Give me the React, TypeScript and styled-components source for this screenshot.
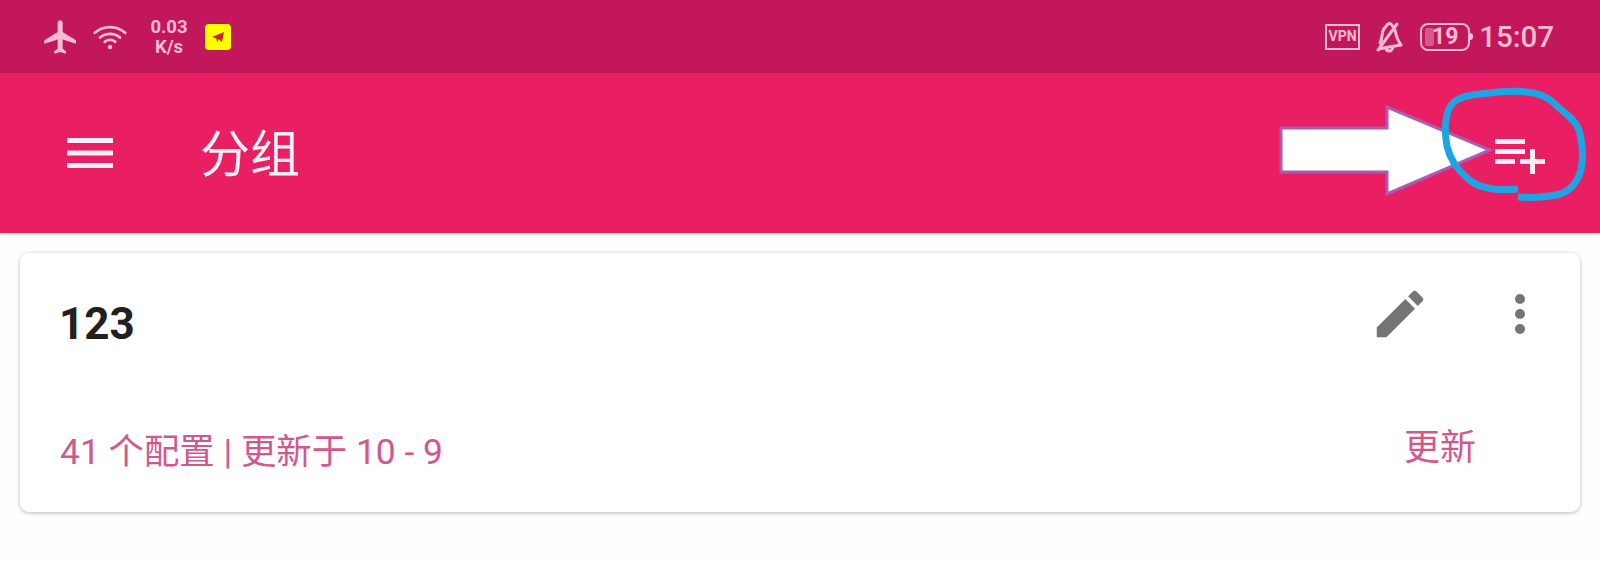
import React from 'react';
import styled, { createGlobalStyle } from 'styled-components';

const GlobalStyle = createGlobalStyle`
  html, body {
    margin: 0;
    padding: 0;
    background: #fefefe;
    font-family: Roboto, "Noto Sans CJK SC", sans-serif;
  }
`;

const Page = styled.div`
  width: 1600px;
  height: 562px;
  overflow: hidden;
  position: relative;
`;

const StatusBar = styled.div`
  height: 73px;
  background: #c2185b;
  color: #f8bbd0;
  display: flex;
  align-items: center;
  justify-content: space-between;
  padding: 0 46px 0 41px;
`;

const StatusGroup = styled.div`
  display: flex;
  align-items: center;
`;

const Speed = styled.div`
  width: 42px;
  margin: 0 14px 0 21px;
  font-size: 18.5px;
  font-weight: 700;
  line-height: 20px;
  text-align: center;
`;

const VpnBadge = styled.div`
  box-sizing: border-box;
  width: 35px;
  height: 26px;
  border: 2.5px solid #f8bbd0;
  font-size: 14px;
  font-weight: 700;
  line-height: 21px;
  text-align: center;
`;

const Battery = styled.div`
  box-sizing: border-box;
  width: 50px;
  height: 28px;
  margin: 0 2px 0 17px;
  border: 2.5px solid #f8bbd0;
  border-radius: 8px;
  font-size: 23px;
  font-weight: 700;
  line-height: 23px;
  text-align: center;
  position: relative;

  &::before {
    content: '';
    position: absolute;
    left: 3px;
    top: 3px;
    bottom: 3px;
    width: 9px;
    border-radius: 2px;
    background: rgba(248, 187, 208, 0.4);
  }

  &::after {
    content: '';
    position: absolute;
    right: -5px;
    top: 8px;
    width: 3px;
    height: 7px;
    border-radius: 0 3px 3px 0;
    background: #f8bbd0;
  }
`;

const Clock = styled.div`
  margin-left: 7px;
  font-size: 29.5px;
  font-weight: 500;
`;

const Toolbar = styled.div`
  height: 160px;
  background: #e91e63;
  display: flex;
  align-items: center;
  padding: 0 55px 0 67px;
  box-shadow: 0 2px 3px rgba(0, 0, 0, 0.12);
  position: relative;
`;

const Title = styled.div`
  margin: 4px 0 0 87px;
  color: #fdeef4;
  font-size: 50px;
  line-height: 60px;
`;

const Spacer = styled.div`
  flex: 1;
`;

const AddIcon = styled.svg`
  margin-top: 7px;
`;

const Annotation = styled.svg`
  position: absolute;
  left: 0;
  top: 0;
  pointer-events: none;
`;

const Card = styled.div`
  box-sizing: border-box;
  height: 259px;
  margin: 20px 20px 0;
  padding: 30px 50px 0 40px;
  background: #fff;
  border-radius: 9px;
  box-shadow: 0 1px 4px rgba(0, 0, 0, 0.28);
`;

const CardTop = styled.div`
  display: flex;
  justify-content: space-between;
  align-items: flex-start;
  height: 147px;
`;

const Name = styled.div`
  margin: 15px 0 0 -1px;
  color: #212121;
  font-size: 44px;
  font-weight: 700;
  line-height: 52px;
`;

const Actions = styled.div`
  display: flex;
  align-items: center;
  gap: 84px;
  margin-right: 5px;
`;

const CardBottom = styled.div`
  display: flex;
  justify-content: space-between;
  align-items: center;
  color: #d4578c;
  font-size: 35.4px;
  line-height: 44px;
`;

const UpdateButton = styled.div`
  font-size: 36px;
  margin-right: 54px;
  margin-top: -9px;
`;

export default function App() {
  return (
    <Page>
      <GlobalStyle />
      <StatusBar>
        <StatusGroup>
          <svg width="40" height="40" viewBox="0 0 24 24" fill="#f8bbd0">
            <path d="M21 16v-2l-8-5V3.5c0-.83-.67-1.5-1.5-1.5S10 2.67 10 3.5V9l-8 5v2l8-2.5V19l-2 1.5V22l3.5-1 3.5 1v-1.5L13 19v-5.5l8 2.5z" />
          </svg>
          <svg width="34" height="28" viewBox="0 0 36 28" fill="none" stroke="#f8bbd0" strokeWidth="3" strokeLinecap="round" style={{ marginLeft: 12 }}>
            <path d="M2 9.5C11 1.5 25 1.5 34 9.5" />
            <path d="M7.5 14.5C13.5 9.5 22.5 9.5 28.5 14.5" />
            <path d="M12.5 19C15.5 16.5 20.5 16.5 23.5 19" />
            <circle cx="18" cy="24.5" r="2.4" fill="#f8bbd0" stroke="none" />
          </svg>
          <Speed>
            0.03
            <br />
            K/s
          </Speed>
          <svg width="28" height="28" viewBox="0 0 28 28">
            <rect x="0.5" y="0.5" width="27" height="27" rx="4" fill="#ffff00" stroke="#a8202c" strokeWidth="1" />
            <path d="M8 14L20 9L18 19L14.5 16L13 19.5L12.5 15.5Z" fill="#c62828" />
          </svg>
        </StatusGroup>
        <StatusGroup>
          <VpnBadge>VPN</VpnBadge>
          <svg width="28" height="32" viewBox="0 0 28 32" fill="none" stroke="#f8bbd0" strokeWidth="3" strokeLinecap="round" strokeLinejoin="round" style={{ marginLeft: 15 }}>
            <path d="M5 22C8 17 6 10 10 6.5C12 4.5 12 3 14 2.5C16 2 17 4 18 5.5" />
            <path d="M20 9C21 14 22 19 26 24C20 25 12 26 4 28" />
            <path d="M22 3L3 29" />
            <path d="M11 27.5C12 31 17 31 18 26" />
          </svg>
          <Battery>19</Battery>
          <Clock>15:07</Clock>
        </StatusGroup>
      </StatusBar>
      <Toolbar>
        <svg width="46" height="30" viewBox="0 0 46 30" fill="#fdeef4">
          <rect x="0" y="0" width="46" height="5" />
          <rect x="0" y="12.5" width="46" height="5" />
          <rect x="0" y="25" width="46" height="5" />
        </svg>
        <Title>分组</Title>
        <Spacer />
        <AddIcon width="50" height="36" viewBox="0 0 50 36" fill="#fdeef4">
          <rect x="0" y="0" width="30" height="5" />
          <rect x="0" y="10" width="30" height="5" />
          <rect x="0" y="20" width="20" height="5" />
          <rect x="25" y="20" width="25" height="5" />
          <rect x="35" y="10" width="5" height="25" />
        </AddIcon>
        <Annotation width="1600" height="160" viewBox="0 73 1600 160">
          <path d="M1281 128H1387V107L1490 150L1387 194V172H1281Z" fill="#fff" stroke="#a95cb0" strokeWidth="3" />
          <path
            d="M1518 189C1508 190 1500 190 1493 189C1480 187 1473 184 1467 178C1458 170 1450 160 1447 146C1444 130 1445 112 1452 104C1458 97 1468 95 1480 94C1497 92 1513 90 1527 92C1540 93 1548 97 1555 104C1562 112 1575 118 1579 130C1583 145 1583 160 1581 170C1578 180 1572 190 1560 194C1548 197 1532 198 1518 197"
            fill="none"
            stroke="#1ea3e3"
            strokeWidth="7"
          />
        </Annotation>
      </Toolbar>
      <Card>
        <CardTop>
          <Name>123</Name>
          <Actions>
            <svg width="62" height="62" viewBox="0 0 24 24" fill="#757575">
              <path d="M3 17.25V21h3.75L17.81 9.94l-3.75-3.75L3 17.25zM20.71 7.04c.39-.39.39-1.02 0-1.41l-2.34-2.34c-.39-.39-1.02-.39-1.41 0l-1.83 1.83 3.75 3.75 1.83-1.83z" />
            </svg>
            <svg width="10" height="40" viewBox="0 0 10 40" fill="#757575">
              <circle cx="5" cy="5" r="5" />
              <circle cx="5" cy="20" r="5" />
              <circle cx="5" cy="35" r="5" />
            </svg>
          </Actions>
        </CardTop>
        <CardBottom>
          <div>41 个配置 | 更新于 10 - 9</div>
          <UpdateButton>更新</UpdateButton>
        </CardBottom>
      </Card>
    </Page>
  );
}
